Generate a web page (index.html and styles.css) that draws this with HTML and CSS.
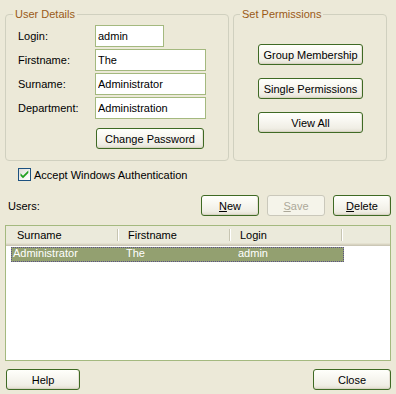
FILE: index.html
```html
<!DOCTYPE html>
<html>
<head>
<meta charset="utf-8">
<link rel="stylesheet" href="styles.css">
</head>
<body>
<div class="dialog">
  <div class="groups">
    <fieldset class="group group-user">
      <legend>User Details</legend>
      <div class="user-body">
        <div class="form-grid">
          <label class="lbl">Login:</label>
          <input class="edit edit-short" type="text" value="admin">
          <label class="lbl">Firstname:</label>
          <input class="edit" type="text" value="The">
          <label class="lbl">Surname:</label>
          <input class="edit" type="text" value="Administrator">
          <label class="lbl">Department:</label>
          <input class="edit" type="text" value="Administration">
        </div>
        <button class="btn btn-pass">Change Password</button>
      </div>
    </fieldset>
    <fieldset class="group group-perm">
      <legend>Set Permissions</legend>
      <div class="perm-body">
        <button class="btn btn-perm">Group Membership</button>
        <button class="btn btn-perm">Single Permissions</button>
        <button class="btn btn-perm">View All</button>
      </div>
    </fieldset>
  </div>

  <div class="check-row">
    <span class="checkbox">
      <svg width="11" height="11" viewBox="0 0 11 11"><path d="M1.5 4.3 L4 6.8 L9.3 1.5 L9.3 4 L4 9.3 L1.5 6.8 Z" fill="#21A121"/></svg>
    </span>
    <span class="check-label">Accept Windows Authentication</span>
  </div>

  <div class="users-row">
    <span class="users-label">Users:</span>
    <div class="users-btns">
      <button class="btn btn-small"><u>N</u>ew</button>
      <button class="btn btn-small btn-disabled"><u>S</u>ave</button>
      <button class="btn btn-small"><u>D</u>elete</button>
    </div>
  </div>

  <div class="list">
    <div class="list-header">
      <div class="hcell hcell-first">Surname</div>
      <div class="hcell">Firstname</div>
      <div class="hcell">Login</div>
    </div>
    <div class="list-row selected">
      <div class="cell cell-first">Administrator</div>
      <div class="cell">The</div>
      <div class="cell">admin</div>
    </div>
  </div>

  <div class="bottom-row">
    <button class="btn btn-help">Help</button>
    <button class="btn btn-close">Close</button>
  </div>
</div>
</body>
</html>
```

FILE: styles.css
```css
* { box-sizing: border-box; }

html, body {
  margin: 0;
  padding: 0;
  background: #ECE9D8;
  width: 396px;
  height: 394px;
  overflow: hidden;
}

body {
  font-family: "Liberation Sans", Arial, sans-serif;
  font-size: 11px;
  color: #000;
}

.dialog {
  padding: 8px 5px 0 5px;
  display: flex;
  flex-direction: column;
}

.groups {
  display: flex;
  gap: 4px;
  align-items: stretch;
}

.group {
  margin: 0;
  padding: 0;
  border: 1px solid #D0D0BF;
  border-radius: 4px;
  min-width: 0;
}

.group legend {
  color: #9A5A17;
  padding: 0 2px;
  line-height: 13px;
  height: 13px;
}

.group-user { width: 224px; }
.group-user legend { margin-left: 7px; }

.group-perm { width: 154px; }
.group-perm legend { margin-left: 6px; }

.user-body {
  padding: 4px 0 11px 12px;
  display: flex;
  flex-direction: column;
}

.form-grid {
  display: grid;
  grid-template-columns: 77px auto;
  row-gap: 2px;
  align-items: center;
}

.lbl {
  line-height: 22px;
}

.edit {
  height: 22px;
  width: 111px;
  border: 1px solid #A4B97F;
  background: #fff;
  font-family: inherit;
  font-size: 11px;
  padding: 0 0 0 2px;
  margin: 0;
  color: #000;
  outline: none;
}

.edit-short { width: 69px; }

.btn {
  font-family: inherit;
  font-size: 11px;
  color: #000;
  height: 21px;
  padding: 0;
  margin: 0;
  border: 1px solid #3F6A24;
  border-radius: 3px;
  background: linear-gradient(to bottom, #FFFFFB 0%, #F8F7F1 40%, #F0EEE5 80%, #E2DED0 100%);
  box-shadow: inset 0 -1px 0 #D8D3C4, inset -1px 0 0 #E6E2D6;
  text-align: center;
}

.btn-pass {
  width: 108px;
  margin: 9px 0 0 78px;
}

.perm-body {
  display: flex;
  flex-direction: column;
  align-items: center;
  gap: 13px;
  padding: 23px 0 10px 1px;
}

.btn-perm { width: 105px; }

.check-row {
  display: flex;
  align-items: center;
  margin-top: 7px;
  padding-left: 13px;
  height: 13px;
}

.checkbox {
  width: 13px;
  height: 13px;
  border: 1px solid #1C5180;
  background: linear-gradient(135deg, #DCDCD7 0%, #F5F5F1 60%, #FFFFFF 100%);
  display: flex;
  align-items: center;
  justify-content: center;
}

.checkbox svg { display: block; }

.check-label { margin-left: 3px; }

.users-row {
  display: flex;
  align-items: center;
  justify-content: space-between;
  margin-top: 14px;
  padding-left: 3px;
}

.users-btns {
  display: flex;
  gap: 8px;
}

.btn-small { width: 58px; }

.btn-disabled {
  color: #ACA899;
  border-color: #CAC8BB;
  background: #F5F4EA;
  box-shadow: none;
}

.list {
  margin-top: 9px;
  height: 136px;
  border: 1px solid #A4B97F;
  background: #fff;
}

.list-header {
  display: flex;
  height: 20px;
  background: linear-gradient(to bottom, #EBEADB 0, #EBEADB 17px, #E4E1D0 17px, #E4E1D0 18px, #D8D4C2 18px, #D8D4C2 19px, #CBC7B5 19px);
}

.hcell {
  width: 112px;
  padding-left: 10px;
  line-height: 19px;
  position: relative;
}

.hcell-first { padding-left: 11px; }

.hcell::after {
  content: "";
  position: absolute;
  right: 0;
  top: 3px;
  height: 12px;
  width: 1px;
  background: #C7C5B2;
  box-shadow: 1px 0 0 #FFFFFF;
}

.list-row {
  display: grid;
  grid-template-columns: 115px 112px 1fr;
  width: 333px;
  height: 15px;
  margin: 1px 0 0 5px;
  line-height: 13px;
}

.selected {
  background: #93A070;
  color: #fff;
  outline: 1px dotted #5A4F8A;
  outline-offset: -1px;
}

.cell-first { padding-left: 2px; }

.bottom-row {
  display: flex;
  justify-content: space-between;
  margin-top: 8px;
}

.btn-help { width: 74px; margin-left: 1px; }
.btn-close { width: 78px; }
```
